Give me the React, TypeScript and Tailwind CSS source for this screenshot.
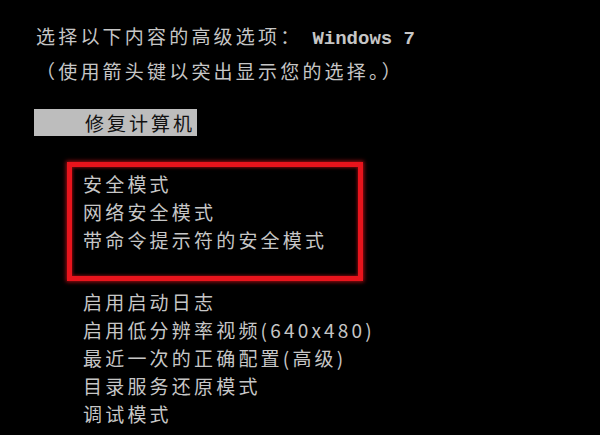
export default function App() {
  const safeModes = ['安全模式', '网络安全模式', '带命令提示符的安全模式']
  const others = [
    '启用启动日志',
    '启用低分辨率视频(640x480)',
    '最近一次的正确配置(高级)',
    '目录服务还原模式',
    '调试模式',
  ]

  return (
    <div
      className="w-[600px] h-[435px] overflow-hidden bg-black text-[#c6c6c6] text-[19px] leading-[28px] tracking-[3.2px]"
      style={{ fontFamily: '"Noto Sans CJK SC", "Noto Sans", sans-serif' }}
    >
      <div className="pt-[20px] pl-[36px]">
        <p className="leading-[32px]">
          选择以下内容的高级选项：
          <span className="ml-[10px] font-['Liberation_Mono',monospace] text-[19px] tracking-normal font-bold">
            Windows 7
          </span>
        </p>
        <p className="leading-[32px]">（使用箭头键以突出显示您的选择。）</p>

        <div className="mt-[22px] -ml-[2px] w-[163px] h-[27px] bg-[#bdbdbd] text-[#111] leading-[27px] pl-[51px] tracking-[3px]">
          修复计算机
        </div>
      </div>

      <div className="ml-[67px] mt-[26px] w-[296px] border-[5px] border-[#e8141c] pl-[11px] pt-[3px] pb-[22px] shadow-[0_0_4px_1px_rgba(232,20,28,0.7),inset_0_0_3px_1px_rgba(232,20,28,0.5)]">
        {safeModes.map((t) => (
          <p key={t}>{t}</p>
        ))}
      </div>

      <div className="pl-[83px] mt-[7px]">
        {others.map((t) => (
          <p key={t}>{t}</p>
        ))}
      </div>
    </div>
  )
}
